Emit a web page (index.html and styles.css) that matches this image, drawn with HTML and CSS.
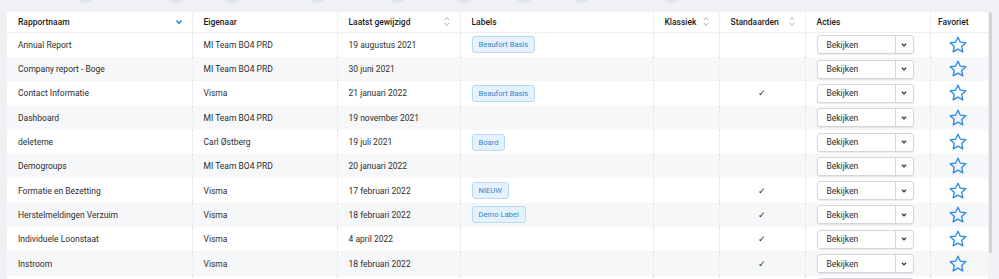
FILE: index.html
```html
<!DOCTYPE html>
<html lang="nl">
<head>
<meta charset="utf-8">
<title>Rapporten</title>
<link rel="stylesheet" href="styles.css">
</head>
<body>
<div class="page">
  <div class="bubbles">
    <span class="bubble b1"></span><span class="bubble b2"></span><span class="bubble b3"></span>
    <span class="bubble b4"></span><span class="bubble b5"></span><span class="bubble b6"></span>
    <span class="bubble b7"></span><span class="bubble b8"></span><span class="bubble b9"></span>
  </div>
  <div class="frame">
    <table class="grid">
      <colgroup>
        <col class="c-name"><col class="c-owner"><col class="c-date"><col class="c-labels">
        <col class="c-klassiek"><col class="c-std"><col class="c-acties"><col class="c-fav">
      </colgroup>
      <thead>
        <tr>
          <th><div class="th-in">Rapportnaam<svg class="sort-active" viewBox="0 0 8 6" width="8" height="6"><path d="M1.5 1.5 L4 4.2 L6.5 1.5" fill="none" stroke="#2b86e0" stroke-width="1.6"/></svg></div></th>
          <th><div class="th-in">Eigenaar</div></th>
          <th><div class="th-in">Laatst gewijzigd<svg class="sort" viewBox="0 0 8 11" width="8" height="11"><path d="M1.8 4 L4 1.6 L6.2 4 M1.8 7 L4 9.4 L6.2 7" fill="none" stroke="#a9adb3" stroke-width="1"/></svg></div></th>
          <th><div class="th-in">Labels</div></th>
          <th><div class="th-in">Klassiek<svg class="sort" viewBox="0 0 8 11" width="8" height="11"><path d="M1.8 4 L4 1.6 L6.2 4 M1.8 7 L4 9.4 L6.2 7" fill="none" stroke="#a9adb3" stroke-width="1"/></svg></div></th>
          <th><div class="th-in">Standaarden<svg class="sort" viewBox="0 0 8 11" width="8" height="11"><path d="M1.8 4 L4 1.6 L6.2 4 M1.8 7 L4 9.4 L6.2 7" fill="none" stroke="#a9adb3" stroke-width="1"/></svg></div></th>
          <th><div class="th-in">Acties</div></th>
          <th class="center"><div class="th-in th-center">Favoriet</div></th>
        </tr>
      </thead>
      <tbody>
        <tr>
          <td>Annual Report</td><td>MI Team BO4 PRD</td><td>19 augustus 2021</td>
          <td><span class="tag">Beaufort Basis</span></td><td></td><td></td>
          <td><div class="action"><span class="action-main">Bekijken</span><span class="action-toggle"><svg viewBox="0 0 6 4" width="6" height="4"><path d="M1 0.8 L3 2.9 L5 0.8" fill="none" stroke="#333" stroke-width="1.3"/></svg></span></div></td>
          <td class="center"><svg class="star" viewBox="0 0 24 24" width="20" height="20"><path d="M12 2.6 L14.8 8.6 L21.3 9.3 L16.4 13.7 L17.8 20.2 L12 16.9 L6.2 20.2 L7.6 13.7 L2.7 9.3 L9.2 8.6 Z" fill="none" stroke="#2a8ae6" stroke-width="1.6" stroke-linejoin="round"/></svg></td>
        </tr>
        <tr>
          <td>Company report - Boge</td><td>MI Team BO4 PRD</td><td>30 juni 2021</td>
          <td></td><td></td><td></td>
          <td><div class="action"><span class="action-main">Bekijken</span><span class="action-toggle"><svg viewBox="0 0 6 4" width="6" height="4"><path d="M1 0.8 L3 2.9 L5 0.8" fill="none" stroke="#333" stroke-width="1.3"/></svg></span></div></td>
          <td class="center"><svg class="star" viewBox="0 0 24 24" width="20" height="20"><path d="M12 2.6 L14.8 8.6 L21.3 9.3 L16.4 13.7 L17.8 20.2 L12 16.9 L6.2 20.2 L7.6 13.7 L2.7 9.3 L9.2 8.6 Z" fill="none" stroke="#2a8ae6" stroke-width="1.6" stroke-linejoin="round"/></svg></td>
        </tr>
        <tr>
          <td>Contact Informatie</td><td>Visma</td><td>21 januari 2022</td>
          <td><span class="tag">Beaufort Basis</span></td><td></td><td class="center check">✓</td>
          <td><div class="action"><span class="action-main">Bekijken</span><span class="action-toggle"><svg viewBox="0 0 6 4" width="6" height="4"><path d="M1 0.8 L3 2.9 L5 0.8" fill="none" stroke="#333" stroke-width="1.3"/></svg></span></div></td>
          <td class="center"><svg class="star" viewBox="0 0 24 24" width="20" height="20"><path d="M12 2.6 L14.8 8.6 L21.3 9.3 L16.4 13.7 L17.8 20.2 L12 16.9 L6.2 20.2 L7.6 13.7 L2.7 9.3 L9.2 8.6 Z" fill="none" stroke="#2a8ae6" stroke-width="1.6" stroke-linejoin="round"/></svg></td>
        </tr>
        <tr>
          <td>Dashboard</td><td>MI Team BO4 PRD</td><td>19 november 2021</td>
          <td></td><td></td><td></td>
          <td><div class="action"><span class="action-main">Bekijken</span><span class="action-toggle"><svg viewBox="0 0 6 4" width="6" height="4"><path d="M1 0.8 L3 2.9 L5 0.8" fill="none" stroke="#333" stroke-width="1.3"/></svg></span></div></td>
          <td class="center"><svg class="star" viewBox="0 0 24 24" width="20" height="20"><path d="M12 2.6 L14.8 8.6 L21.3 9.3 L16.4 13.7 L17.8 20.2 L12 16.9 L6.2 20.2 L7.6 13.7 L2.7 9.3 L9.2 8.6 Z" fill="none" stroke="#2a8ae6" stroke-width="1.6" stroke-linejoin="round"/></svg></td>
        </tr>
        <tr>
          <td>deleteme</td><td>Carl Østberg</td><td>19 juli 2021</td>
          <td><span class="tag">Board</span></td><td></td><td></td>
          <td><div class="action"><span class="action-main">Bekijken</span><span class="action-toggle"><svg viewBox="0 0 6 4" width="6" height="4"><path d="M1 0.8 L3 2.9 L5 0.8" fill="none" stroke="#333" stroke-width="1.3"/></svg></span></div></td>
          <td class="center"><svg class="star" viewBox="0 0 24 24" width="20" height="20"><path d="M12 2.6 L14.8 8.6 L21.3 9.3 L16.4 13.7 L17.8 20.2 L12 16.9 L6.2 20.2 L7.6 13.7 L2.7 9.3 L9.2 8.6 Z" fill="none" stroke="#2a8ae6" stroke-width="1.6" stroke-linejoin="round"/></svg></td>
        </tr>
        <tr>
          <td>Demogroups</td><td>MI Team BO4 PRD</td><td>20 januari 2022</td>
          <td></td><td></td><td></td>
          <td><div class="action"><span class="action-main">Bekijken</span><span class="action-toggle"><svg viewBox="0 0 6 4" width="6" height="4"><path d="M1 0.8 L3 2.9 L5 0.8" fill="none" stroke="#333" stroke-width="1.3"/></svg></span></div></td>
          <td class="center"><svg class="star" viewBox="0 0 24 24" width="20" height="20"><path d="M12 2.6 L14.8 8.6 L21.3 9.3 L16.4 13.7 L17.8 20.2 L12 16.9 L6.2 20.2 L7.6 13.7 L2.7 9.3 L9.2 8.6 Z" fill="none" stroke="#2a8ae6" stroke-width="1.6" stroke-linejoin="round"/></svg></td>
        </tr>
        <tr>
          <td>Formatie en Bezetting</td><td>Visma</td><td>17 februari 2022</td>
          <td><span class="tag">NIEUW</span></td><td></td><td class="center check">✓</td>
          <td><div class="action"><span class="action-main">Bekijken</span><span class="action-toggle"><svg viewBox="0 0 6 4" width="6" height="4"><path d="M1 0.8 L3 2.9 L5 0.8" fill="none" stroke="#333" stroke-width="1.3"/></svg></span></div></td>
          <td class="center"><svg class="star" viewBox="0 0 24 24" width="20" height="20"><path d="M12 2.6 L14.8 8.6 L21.3 9.3 L16.4 13.7 L17.8 20.2 L12 16.9 L6.2 20.2 L7.6 13.7 L2.7 9.3 L9.2 8.6 Z" fill="none" stroke="#2a8ae6" stroke-width="1.6" stroke-linejoin="round"/></svg></td>
        </tr>
        <tr>
          <td>Herstelmeldingen Verzuim</td><td>Visma</td><td>18 februari 2022</td>
          <td><span class="tag">Demo Label</span></td><td></td><td class="center check">✓</td>
          <td><div class="action"><span class="action-main">Bekijken</span><span class="action-toggle"><svg viewBox="0 0 6 4" width="6" height="4"><path d="M1 0.8 L3 2.9 L5 0.8" fill="none" stroke="#333" stroke-width="1.3"/></svg></span></div></td>
          <td class="center"><svg class="star" viewBox="0 0 24 24" width="20" height="20"><path d="M12 2.6 L14.8 8.6 L21.3 9.3 L16.4 13.7 L17.8 20.2 L12 16.9 L6.2 20.2 L7.6 13.7 L2.7 9.3 L9.2 8.6 Z" fill="none" stroke="#2a8ae6" stroke-width="1.6" stroke-linejoin="round"/></svg></td>
        </tr>
        <tr>
          <td>Individuele Loonstaat</td><td>Visma</td><td>4 april 2022</td>
          <td></td><td></td><td class="center check">✓</td>
          <td><div class="action"><span class="action-main">Bekijken</span><span class="action-toggle"><svg viewBox="0 0 6 4" width="6" height="4"><path d="M1 0.8 L3 2.9 L5 0.8" fill="none" stroke="#333" stroke-width="1.3"/></svg></span></div></td>
          <td class="center"><svg class="star" viewBox="0 0 24 24" width="20" height="20"><path d="M12 2.6 L14.8 8.6 L21.3 9.3 L16.4 13.7 L17.8 20.2 L12 16.9 L6.2 20.2 L7.6 13.7 L2.7 9.3 L9.2 8.6 Z" fill="none" stroke="#2a8ae6" stroke-width="1.6" stroke-linejoin="round"/></svg></td>
        </tr>
        <tr>
          <td>Instroom</td><td>Visma</td><td>18 februari 2022</td>
          <td></td><td></td><td class="center check">✓</td>
          <td><div class="action"><span class="action-main">Bekijken</span><span class="action-toggle"><svg viewBox="0 0 6 4" width="6" height="4"><path d="M1 0.8 L3 2.9 L5 0.8" fill="none" stroke="#333" stroke-width="1.3"/></svg></span></div></td>
          <td class="center"><svg class="star" viewBox="0 0 24 24" width="20" height="20"><path d="M12 2.6 L14.8 8.6 L21.3 9.3 L16.4 13.7 L17.8 20.2 L12 16.9 L6.2 20.2 L7.6 13.7 L2.7 9.3 L9.2 8.6 Z" fill="none" stroke="#2a8ae6" stroke-width="1.6" stroke-linejoin="round"/></svg></td>
        </tr>
        <tr>
          <td></td><td></td><td></td><td></td><td></td><td></td>
          <td><div class="action"><span class="action-main"></span><span class="action-toggle"></span></div></td>
          <td class="center"></td>
        </tr>
      </tbody>
    </table>
    <div class="scrollbar"><div class="thumb"></div></div>
  </div>
</div>
</body>
</html>
```

FILE: styles.css
```css
html, body {
  margin: 0;
  padding: 0;
  background: #eff1f5;
  height: 279px;
  overflow: hidden;
}

.page {
  font-family: Roboto, "Liberation Sans", Arial, sans-serif;
  font-size: 8.5px;
  color: #2e2e2e;
}

.bubbles {
  height: 12px;
  display: flex;
  overflow: hidden;
}

.bubble {
  display: block;
  width: 22px;
  height: 22px;
  border-radius: 50%;
  background: #e0e5e9;
  margin-top: -19px;
  flex: none;
}
.b1 { margin-left: 75px; }
.b2 { margin-left: 68px; }
.b3 { margin-left: 34px; }
.b4 { margin-left: 64px; }
.b5 { margin-left: 58px; }
.b6 { margin-left: 44px; }
.b7 { margin-left: 38px; }
.b8 { margin-left: 36px; }
.b9 { margin-left: 67px; }

.frame {
  display: flex;
  margin-left: 7px;
  align-items: flex-start;
}

.grid {
  width: 981px;
  table-layout: fixed;
  border-collapse: collapse;
  background: #fff;
}

.c-name { width: 185px; }
.c-owner { width: 145px; }
.c-date { width: 123px; }
.c-labels { width: 193px; }
.c-klassiek { width: 66px; }
.c-std { width: 86px; }
.c-acties { width: 125px; }
.c-fav { width: 58px; }

.grid th {
  height: 19.7px;
  padding: 0 0 0 11px;
  text-align: left;
  font-weight: 500;
  color: #1c1c1c;
  border-left: 1px solid #eef0f3;
  border-bottom: 1px solid #eceef1;
  white-space: nowrap;
}
.grid th:first-child { border-left: none; }

.th-in {
  display: flex;
  align-items: center;
  justify-content: space-between;
  padding-right: 9px;
}
.th-center { justify-content: center; padding-right: 12px; }

.sort-active, .sort { flex: none; }

.grid td {
  height: 24.3px;
  padding: 0 0 0 11px;
  border-left: 1px dotted #dcdfe3;
  white-space: nowrap;
  overflow: hidden;
  vertical-align: middle;
}
.grid td:first-child { border-left: none; }

.grid tbody tr:nth-child(even) td { background: #f6f7f9; }

.grid .center { text-align: center; padding-left: 0; }

.check { font-size: 9px; color: #1e1e1e; padding-right: 8px; }

.tag {
  display: inline-block;
  height: 15px;
  line-height: 15px;
  padding: 0 6px;
  font-size: 7.6px;
  color: #3585cf;
  background: #e5f2fd;
  border: 1px solid #b6daf6;
  border-radius: 3px;
}

.action {
  display: flex;
  width: 97px;
  height: 19px;
  border: 1px solid #d3d6da;
  border-radius: 3px;
  background: #fff;
  box-shadow: 0 1px 1px rgba(0, 0, 0, 0.08);
  box-sizing: border-box;
}
.action-main {
  flex: 1;
  display: flex;
  align-items: center;
  padding-left: 9px;
  color: #2b2b2b;
}
.action-toggle {
  width: 17px;
  flex: none;
  border-left: 1px solid #d3d6da;
  display: flex;
  align-items: center;
  justify-content: center;
}

.star { display: block; margin: 0 auto; position: relative; left: -1px; }

.scrollbar {
  width: 3px;
  margin-left: 1px;
  height: 267px;
  background: #f3f4f6;
}
.thumb {
  height: 241px;
  background: #cfd3d8;
  border-radius: 2px;
}
```
